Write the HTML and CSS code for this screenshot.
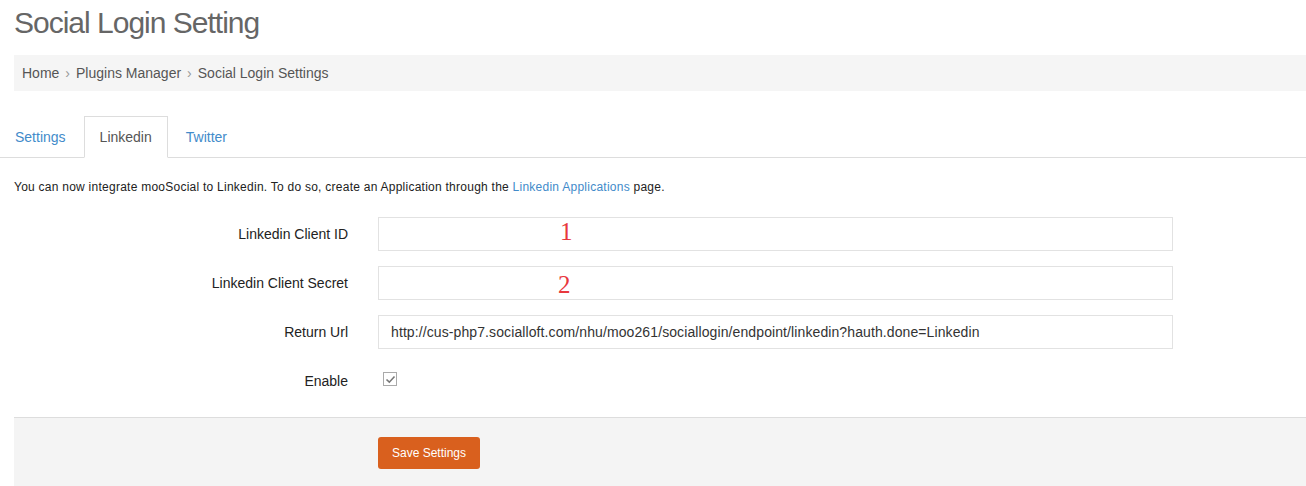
FILE: index.html
```
<!DOCTYPE html>
<html lang="en">
<head>
    <meta charset="UTF-8">
    <title>Social Login Setting</title>
    <link rel="stylesheet" href="styles.css">
</head>
<body>
    <div class="page">
        <h1 class="page-title">Social Login Setting</h1>

        <div class="breadcrumb">
            <a href="#">Home</a><span class="sep">›</span><a href="#">Plugins Manager</a><span class="sep">›</span><span>Social Login Settings</span>
        </div>
    </div>

    <ul class="nav-tabs">
        <li><a href="#">Settings</a></li>
        <li class="active"><a href="#">Linkedin</a></li>
        <li><a href="#">Twitter</a></li>
    </ul>

    <div class="page">
        <p class="intro">You can now integrate mooSocial to Linkedin. To do so, create an Application through the <a href="#">Linkedin Applications</a> page.</p>

        <form class="settings-form">
            <div class="form-row">
                <label class="form-label">Linkedin Client ID</label>
                <div class="field">
                    <input type="text" class="form-input">
                    <span class="note note-a">1</span>
                </div>
            </div>
            <div class="form-row">
                <label class="form-label">Linkedin Client Secret</label>
                <div class="field">
                    <input type="text" class="form-input">
                    <span class="note note-b">2</span>
                </div>
            </div>
            <div class="form-row">
                <label class="form-label">Return Url</label>
                <div class="field">
                    <input type="text" class="form-input" value="http://cus-php7.socialloft.com/nhu/moo261/sociallogin/endpoint/linkedin?hauth.done=Linkedin">
                </div>
            </div>
            <div class="form-row">
                <label class="form-label">Enable</label>
                <div class="field">
                    <span class="checkbox">
                        <svg width="11" height="11" viewBox="0 0 11 11"><polyline points="1.5,5.5 4.3,8.2 9.5,2.5" fill="none" stroke="#777" stroke-width="1.6"/></svg>
                    </span>
                </div>
            </div>

            <div class="form-actions">
                <span></span>
                <div><button type="button" class="btn-save">Save Settings</button></div>
            </div>
        </form>
    </div>
</body>
</html>
```

FILE: styles.css
```
body {
    margin: 0;
    font-family: "Liberation Sans", Arial, sans-serif;
    font-size: 14px;
    color: #333;
    background: #fff;
}
a {
    color: #428bca;
    text-decoration: none;
}
.page {
    padding-left: 14px;
}
.page-title {
    margin: 6px 0 16px;
    font-size: 30px;
    line-height: 33px;
    font-weight: normal;
    letter-spacing: -1px;
    color: #666;
}
.breadcrumb {
    background: #f5f5f5;
    padding: 8px 8px;
    line-height: 20px;
    color: #555;
}
.breadcrumb a {
    color: #555;
}
.breadcrumb .sep {
    padding: 0 6px;
    color: #999;
}
.nav-tabs {
    list-style: none;
    margin: 25px 0 0;
    padding: 0;
    display: flex;
    border-bottom: 1px solid #ddd;
}
.nav-tabs li {
    margin-right: 2px;
    margin-bottom: -1px;
}
.nav-tabs a {
    display: block;
    padding: 10px 15px;
    line-height: 20px;
    border: 1px solid transparent;
}
.nav-tabs li:first-child a {
    padding-left: 14px;
}
.nav-tabs .active a {
    color: #555;
    background: #fff;
    border-color: #ddd #ddd transparent;
}
.intro {
    margin: 21px 0 21px;
    font-size: 12px;
    line-height: 17px;
    letter-spacing: 0.25px;
    color: #222;
}
.form-row {
    display: grid;
    grid-template-columns: 334px 795px;
    column-gap: 30px;
    align-items: center;
    margin-bottom: 15px;
}
.form-label {
    text-align: right;
    color: #222;
}
.field {
    position: relative;
    height: 34px;
}
.form-input {
    box-sizing: border-box;
    width: 100%;
    height: 34px;
    padding: 0 12px;
    border: 1px solid #e2e2e2;
    font-family: "Liberation Sans", Arial, sans-serif;
    font-size: 14px;
    letter-spacing: 0.1px;
    color: #333;
    outline: none;
}
.note {
    position: absolute;
    font-family: "Liberation Serif", "Times New Roman", serif;
    font-size: 25px;
    line-height: 25px;
    color: #e8383d;
}
.note-a {
    top: 2px;
    left: 182px;
}
.note-b {
    top: 6px;
    left: 180px;
}
.checkbox {
    display: flex;
    align-items: center;
    justify-content: center;
    box-sizing: border-box;
    width: 14px;
    height: 14px;
    margin: 8px 0 0 5px;
    border: 1px solid #aaa;
    background: #fff;
}
.form-actions {
    display: grid;
    grid-template-columns: 334px 795px;
    column-gap: 30px;
    margin-top: 19px;
    padding: 19px 0 30px;
    border-top: 1px solid #ddd;
    background: #f4f4f4;
}
.btn-save {
    height: 32px;
    padding: 0 14px;
    border: none;
    border-radius: 3px;
    background: #d9601e;
    color: #fff;
    font-family: "Liberation Sans", Arial, sans-serif;
    font-size: 12px;
    cursor: pointer;
}
```
